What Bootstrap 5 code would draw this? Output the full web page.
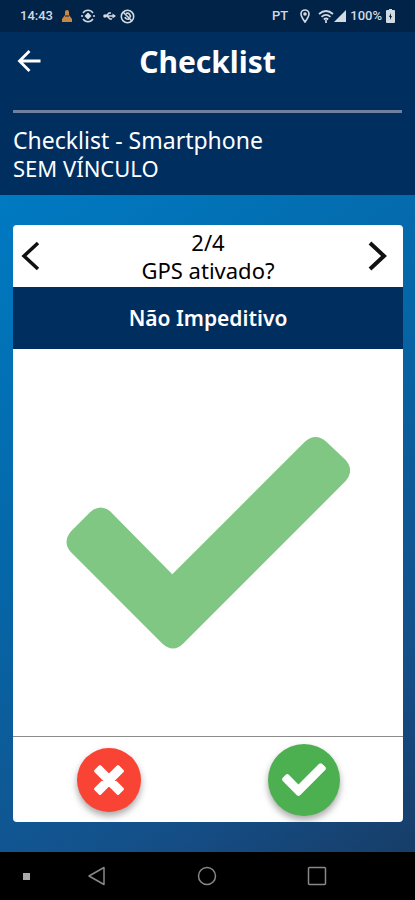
<!DOCTYPE html>
<html lang="pt-BR">
<head>
<meta charset="utf-8">
<meta name="viewport" content="width=device-width, initial-scale=1">
<title>Checklist</title>
<link href="https://cdn.jsdelivr.net/npm/bootstrap@5.3.0/dist/css/bootstrap.min.css" rel="stylesheet">
<style>
body{font-family:"Noto Sans","Open Sans",sans-serif;font-size:22px;line-height:28px}
svg{display:block;flex:none}
.statusbar{height:32px;background:#002347;color:#d3dae2;font:500 13px/16px Roboto,sans-serif;padding:0 20px}
.appbar{height:78px;padding:0 17px 18px;background:#002e5e}
.appbar h1{font-size:30px;line-height:36px}
.navy{background:#002e5e}
.info{padding:0 13px 13px}
.list-name{font-size:23px}
.rule{height:3px;background:#717f9e;margin-bottom:13px}
.stage{padding:30px 12px 30px 13px;background:linear-gradient(145deg,#007ac2 0%,#0567a8 40%,#14508a 78%,#173d68 100%)}
.panel{border-radius:4px}
.question{height:62px;padding:0 8px}
.question button{width:28px}
.kind{height:62px;font-size:21px;font-weight:600}
.answers{height:86px;border-top:1px solid #8b8b8b}
.slot{width:50%;padding-right:4px}
.round{border-radius:50%;box-shadow:0 4px 7px rgba(0,0,0,.35)}
.no{width:64px;height:64px;background:#f94335}
.yes{width:72px;height:72px;background:#4caf50}
.tick{width:73%;height:auto}
.softkeys{height:48px}
.softkeys button{width:26.5%}
.softkeys .hint{width:42px;padding-left:23px}
</style>
<script src="https://cdn.jsdelivr.net/npm/bootstrap@5.3.0/dist/js/bootstrap.bundle.min.js"></script>
</head>
<body class="min-vh-100 d-flex flex-column">
<div class="statusbar d-flex align-items-center justify-content-between">
  <div class="d-flex align-items-center gap-1">
    <span class="me-1">14:43</span>
    <svg width="12" height="14" viewBox="0 0 12 14" fill="#c88743"><path d="M6 1a2 2 0 0 1 2 2v3l3 4v3H1v-3l3-4V3a2 2 0 0 1 2-2z"/><path d="M4 7h4" stroke="#002347"/></svg>
    <svg class="ms-1" width="14" height="14" viewBox="0 0 14 14" fill="none" stroke="#d3dae2" stroke-width="1.4"><path d="M2 4a6 6 0 0 1 10 0M12 10a6 6 0 0 1-10 0M0 7h2M12 7h2"/><path d="M7 3.500l3.500 3.500L7 10.500 3.500 7z" fill="#d3dae2" stroke="none"/></svg>
    <svg class="ms-1" width="13" height="14" viewBox="0 0 13 14" fill="none" stroke="#d3dae2" stroke-width="1.5"><path d="M1 7h10M3 7l3-3h2M4 7l3 3h2"/><path d="M9.500 4.500l3.500 2.500-3.500 2.500z" fill="#d3dae2" stroke="none"/><circle cx="2" cy="7" r="1.800" fill="#d3dae2" stroke="none"/></svg>
    <svg width="15" height="15" viewBox="0 0 15 15" fill="none" stroke="#d3dae2" stroke-width="1.6"><circle cx="7.500" cy="7.500" r="6.200"/><path d="M3 3l9 9M5 8a3 3 0 0 0 4 2M6 4.500a3 3 0 0 1 4 4"/></svg>
  </div>
  <div class="d-flex align-items-center">
    <span class="me-2">PT</span>
    <svg class="mx-1" width="10" height="14" viewBox="0 0 10 14" fill="none" stroke="#d3dae2" stroke-width="1.6"><path d="M5 13C3 10 1 7.500 1 5a4 4 0 0 1 8 0c0 2.500-2 5-4 8z"/><circle cx="5" cy="5" r="1" fill="#d3dae2"/></svg>
    <svg class="ms-1" width="16" height="13" viewBox="0 0 16 13" fill="none" stroke="#d3dae2" stroke-width="1.7"><path d="M1 4q7-6 14 0M3.500 6.800q4.500-4 9 0M5.800 9.500q2.200-2 4.400 0M8 10v3"/></svg>
    <svg class="me-1" width="12" height="12" viewBox="0 0 12 12" fill="#d3dae2"><path d="M12 0v12H0z"/></svg>
    <span>100%</span>
    <svg class="ms-1" width="9" height="14" viewBox="0 0 9 14" fill="#d3dae2"><path d="M3 0h3v1h2a1 1 0 0 1 1 1v11a1 1 0 0 1-1 1H1a1 1 0 0 1-1-1V2a1 1 0 0 1 1-1h2z"/><path d="M5 4L3 8h1v3l2-4H5z" fill="#002347"/></svg>
  </div>
</div>
<header class="appbar text-white d-flex align-items-center justify-content-between">
  <button class="btn p-0 border-0" aria-label="Voltar"><svg width="24" height="24" viewBox="0 0 24 24" fill="none" stroke="#fff" stroke-width="2.800"><path d="M23.500 11H2M12.500 1L2.500 11l10 10"/></svg></button>
  <h1 class="m-0 fw-bold">Checklist</h1>
  <svg width="24" height="24" aria-hidden="true"></svg>
</header>
<section class="navy info text-white"><div class="rule"></div><div class="list-name">Checklist - Smartphone</div><div>SEM VÍNCULO</div></section>
<main class="stage flex-grow-1 d-flex">
  <article class="panel bg-white w-100 d-flex flex-column overflow-hidden">
    <div class="question d-flex align-items-center justify-content-between text-black">
      <button class="btn p-0 border-0" aria-label="Anterior"><svg width="20" height="30" viewBox="0 0 20 30" fill="none" stroke="#111" stroke-width="3.500"><path d="M17 2L3 15l14 13"/></svg></button>
      <div class="text-center"><div>2/4</div><div>GPS ativado?</div></div>
      <button class="btn p-0 border-0" aria-label="Próxima"><svg width="20" height="30" viewBox="0 0 20 30" fill="none" stroke="#111" stroke-width="4"><path d="M3 2l14 13L3 28"/></svg></button>
    </div>
    <div class="kind navy text-white d-flex align-items-center justify-content-center">Não Impeditivo</div>
    <div class="flex-grow-1 d-flex align-items-center justify-content-center">
      <svg class="tick" viewBox="66 437 284 212" fill="#81c784"><path d="M71 532L90 513Q100 504 110 512L172 575 304 443Q315 433 326 443L345 461Q354 471 345 482L183 644Q173 654 162 644L71 553Q62 543 71 532Z"/></svg>
    </div>
    <div class="answers d-flex align-items-center">
      <div class="slot d-flex justify-content-center"><button class="btn p-0 border-0 round no d-flex align-items-center justify-content-center" aria-label="Não"><svg width="32" height="32" viewBox="0 0 32 32" stroke="#fff" fill="#fff" stroke-width="3" stroke-linejoin="round"><path d="M7 2.500L16 11.500 25 2.500 29.500 7 20.500 16 29.500 25 25 29.500 16 20.500 7 29.500 2.500 25 11.500 16 2.500 7Z"/></svg></button></div>
      <div class="slot d-flex justify-content-center"><button class="btn p-0 border-0 round yes d-flex align-items-center justify-content-center" aria-label="Sim"><svg width="44" height="33" viewBox="66 437 284 212" fill="#fff"><path d="M71 532L90 513Q100 504 110 512L172 575 304 443Q315 433 326 443L345 461Q354 471 345 482L183 644Q173 654 162 644L71 553Q62 543 71 532Z"/></svg></button></div>
    </div>
  </article>
</main>
<nav class="softkeys bg-black d-flex align-items-center" aria-label="Sistema">
  <span class="hint"><svg width="7" height="7"><path fill="#aaa" d="M0 0h7v7H0z"/></svg></span>
  <button class="btn p-0 border-0 d-flex justify-content-center" aria-label="Voltar"><svg width="18" height="20" viewBox="0 0 18 20" fill="none" stroke="#888" stroke-width="1.500" stroke-linejoin="round"><path d="M1 10L16 1.500v17z"/></svg></button>
  <button class="btn p-0 border-0 d-flex justify-content-center" aria-label="Início"><svg width="20" height="20" fill="none" stroke="#888" stroke-width="1.500"><circle cx="10" cy="10" r="8.500"/></svg></button>
  <button class="btn p-0 border-0 d-flex justify-content-center" aria-label="Recentes"><svg width="20" height="20" fill="none" stroke="#888" stroke-width="1.500"><rect x="1.500" y="1.500" width="17" height="17" rx="1"/></svg></button>
</nav>
</body>
</html>
